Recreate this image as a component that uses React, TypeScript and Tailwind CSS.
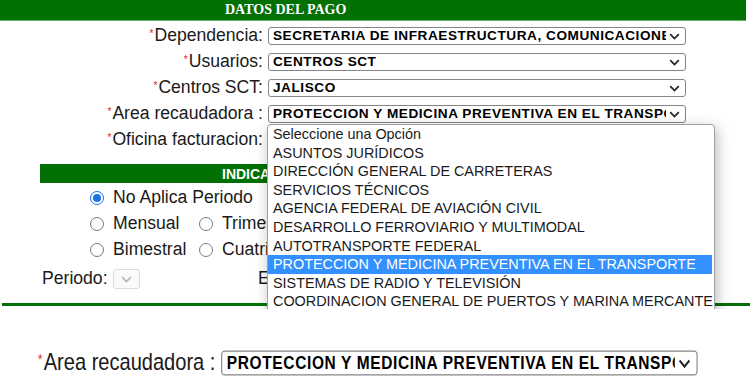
import React from "react";

const Chevron = ({ color = "#222" }: { color?: string }) => (
  <svg width="11" height="7" viewBox="0 0 11 7" className="shrink-0">
    <path d="M1.2 1.2 5.5 5.5 9.8 1.2" fill="none" stroke={color} strokeWidth="1.7" />
  </svg>
);

function Sel({ text }: { text: string }) {
  return (
    <div className="flex h-[18px] w-[418px] items-center rounded-[3px] border border-[#858585] bg-white pl-[4px] pr-[5px] text-[13.6px] font-bold leading-none tracking-[0.55px] text-black">
      <span className="flex-1 overflow-hidden whitespace-nowrap">{text}</span>
      <span className="ml-[3px]">
        <Chevron />
      </span>
    </div>
  );
}

function Label({ text, w }: { text: string; w?: string }) {
  return (
    <div className={"flex h-[18px] items-center justify-end whitespace-nowrap text-[17.6px] leading-none text-[#1a1a1a] " + (w ?? "")}>
      <span className="mr-[1px] self-start pt-[2px] text-[10px] leading-none text-[#e02020]">*</span>
      {text}
    </div>
  );
}

function Radio({ checked }: { checked?: boolean }) {
  return checked ? (
    <span className="flex h-[14px] w-[14px] items-center justify-center rounded-full border-[1.5px] border-[#1a73e8] bg-white">
      <span className="h-[8px] w-[8px] rounded-full bg-[#1a73e8]" />
    </span>
  ) : (
    <span className="h-[14px] w-[14px] rounded-full border border-[#7a7a7a] bg-white" />
  );
}

function RadioItem({ label, checked }: { label: string; checked?: boolean }) {
  return (
    <div className="flex h-[20px] items-center gap-[9px] whitespace-nowrap text-[17.6px] leading-none text-[#1a1a1a]">
      <Radio checked={checked} />
      <span>{label}</span>
    </div>
  );
}

const options = [
  "Seleccione una Opción",
  "ASUNTOS JURÍDICOS",
  "DIRECCIÓN GENERAL DE CARRETERAS",
  "SERVICIOS TÉCNICOS",
  "AGENCIA FEDERAL DE AVIACIÓN CIVIL",
  "DESARROLLO FERROVIARIO Y MULTIMODAL",
  "AUTOTRANSPORTE FEDERAL",
  "PROTECCION Y MEDICINA PREVENTIVA EN EL TRANSPORTE",
  "SISTEMAS DE RADIO Y TELEVISIÓN",
  "COORDINACION GENERAL DE PUERTOS Y MARINA MERCANTE",
  "OTRAS",
];

export default function App() {
  return (
    <div className="h-[380px] w-[750px] overflow-hidden bg-white font-['Liberation_Sans',Arial,sans-serif]">
      {/* top section */}
      <div className="relative h-[309px] overflow-hidden">
        <div className="flex h-[21px] w-[746px] items-center border-b border-[#62b062] bg-[#037003] pl-[225px] font-['Liberation_Serif','Times_New_Roman',serif] text-[14px] font-bold leading-none text-white">
          DATOS DEL PAGO
        </div>

        <div className="mt-[6px] grid grid-cols-[263px_418px] gap-x-[5px] gap-y-[8px]">
          <Label text="Dependencia:" />
          <Sel text="SECRETARIA DE INFRAESTRUCTURA, COMUNICACIONES Y TRANSPORTES" />
          <Label text="Usuarios:" />
          <Sel text="CENTROS SCT" />
          <Label text="Centros SCT:" />
          <Sel text="JALISCO" />
          <Label text="Area recaudadora :" />
          <Sel text="PROTECCION Y MEDICINA PREVENTIVA EN EL TRANSPORTE" />
          <Label text="Oficina facturacion:" />
          <Sel text="Seleccione una Opción" />
        </div>

        <div className="ml-[40px] mt-[15px] flex h-[19px] w-[660px] items-center bg-[#037003] pl-[182px] text-[14px] font-bold leading-none text-white">
          INDICADOR DE PERIODO
        </div>

        <div className="ml-[90px] mt-[5px] flex flex-col gap-[6px]">
          <RadioItem label="No Aplica Periodo" checked />
          <div className="flex">
            <div className="w-[109px]">
              <RadioItem label="Mensual" />
            </div>
            <RadioItem label="Trimestral" />
          </div>
          <div className="flex">
            <div className="w-[109px]">
              <RadioItem label="Bimestral" />
            </div>
            <RadioItem label="Cuatrimestral" />
          </div>
        </div>

        <div className="ml-[42px] mt-[9px] flex h-[20px] items-center text-[17.6px] leading-none text-[#1a1a1a]">
          <span className="w-[71px]">Periodo:</span>
          <div className="flex h-[20px] w-[27px] items-center justify-center rounded-[3px] border border-[#dcdcdc] bg-[#fafafa]">
            <Chevron color="#b5b5b5" />
          </div>
          <span className="ml-[118px]">Ejercicio:</span>
        </div>

        <div className="ml-[2px] mt-[14px] h-[3px] bg-[#037003]" />

        {/* open dropdown list */}
        <div className="absolute left-[267px] top-[124px] w-[448px] overflow-hidden rounded-[4px] border border-[#a0a0a0] bg-white pr-[2px] shadow-[2px_4px_14px_rgba(0,0,0,0.28)]">
          {options.map((o) => {
            const sel = o.startsWith("PROTECCION");
            return (
              <div
                key={o}
                className={
                  sel
                    ? "flex h-[18.6px] items-center whitespace-nowrap bg-[#3390ff] pl-[5px] text-[14.4px] leading-none text-white"
                    : "flex h-[18.6px] items-center whitespace-nowrap pl-[5px] text-[14.4px] leading-none text-[#1a1a1a]"
                }
              >
                {o}
              </div>
            );
          })}
        </div>
      </div>

      {/* bottom zoomed row */}
      <div className="ml-[33px] mt-[45px] flex w-[583px] origin-left scale-x-[1.14] scale-y-[1.4] items-center gap-[5px]">
        <Label text="Area recaudadora :" w="w-[160px]" />
        <Sel text="PROTECCION Y MEDICINA PREVENTIVA EN EL TRANSPORTE" />
      </div>
    </div>
  );
}
